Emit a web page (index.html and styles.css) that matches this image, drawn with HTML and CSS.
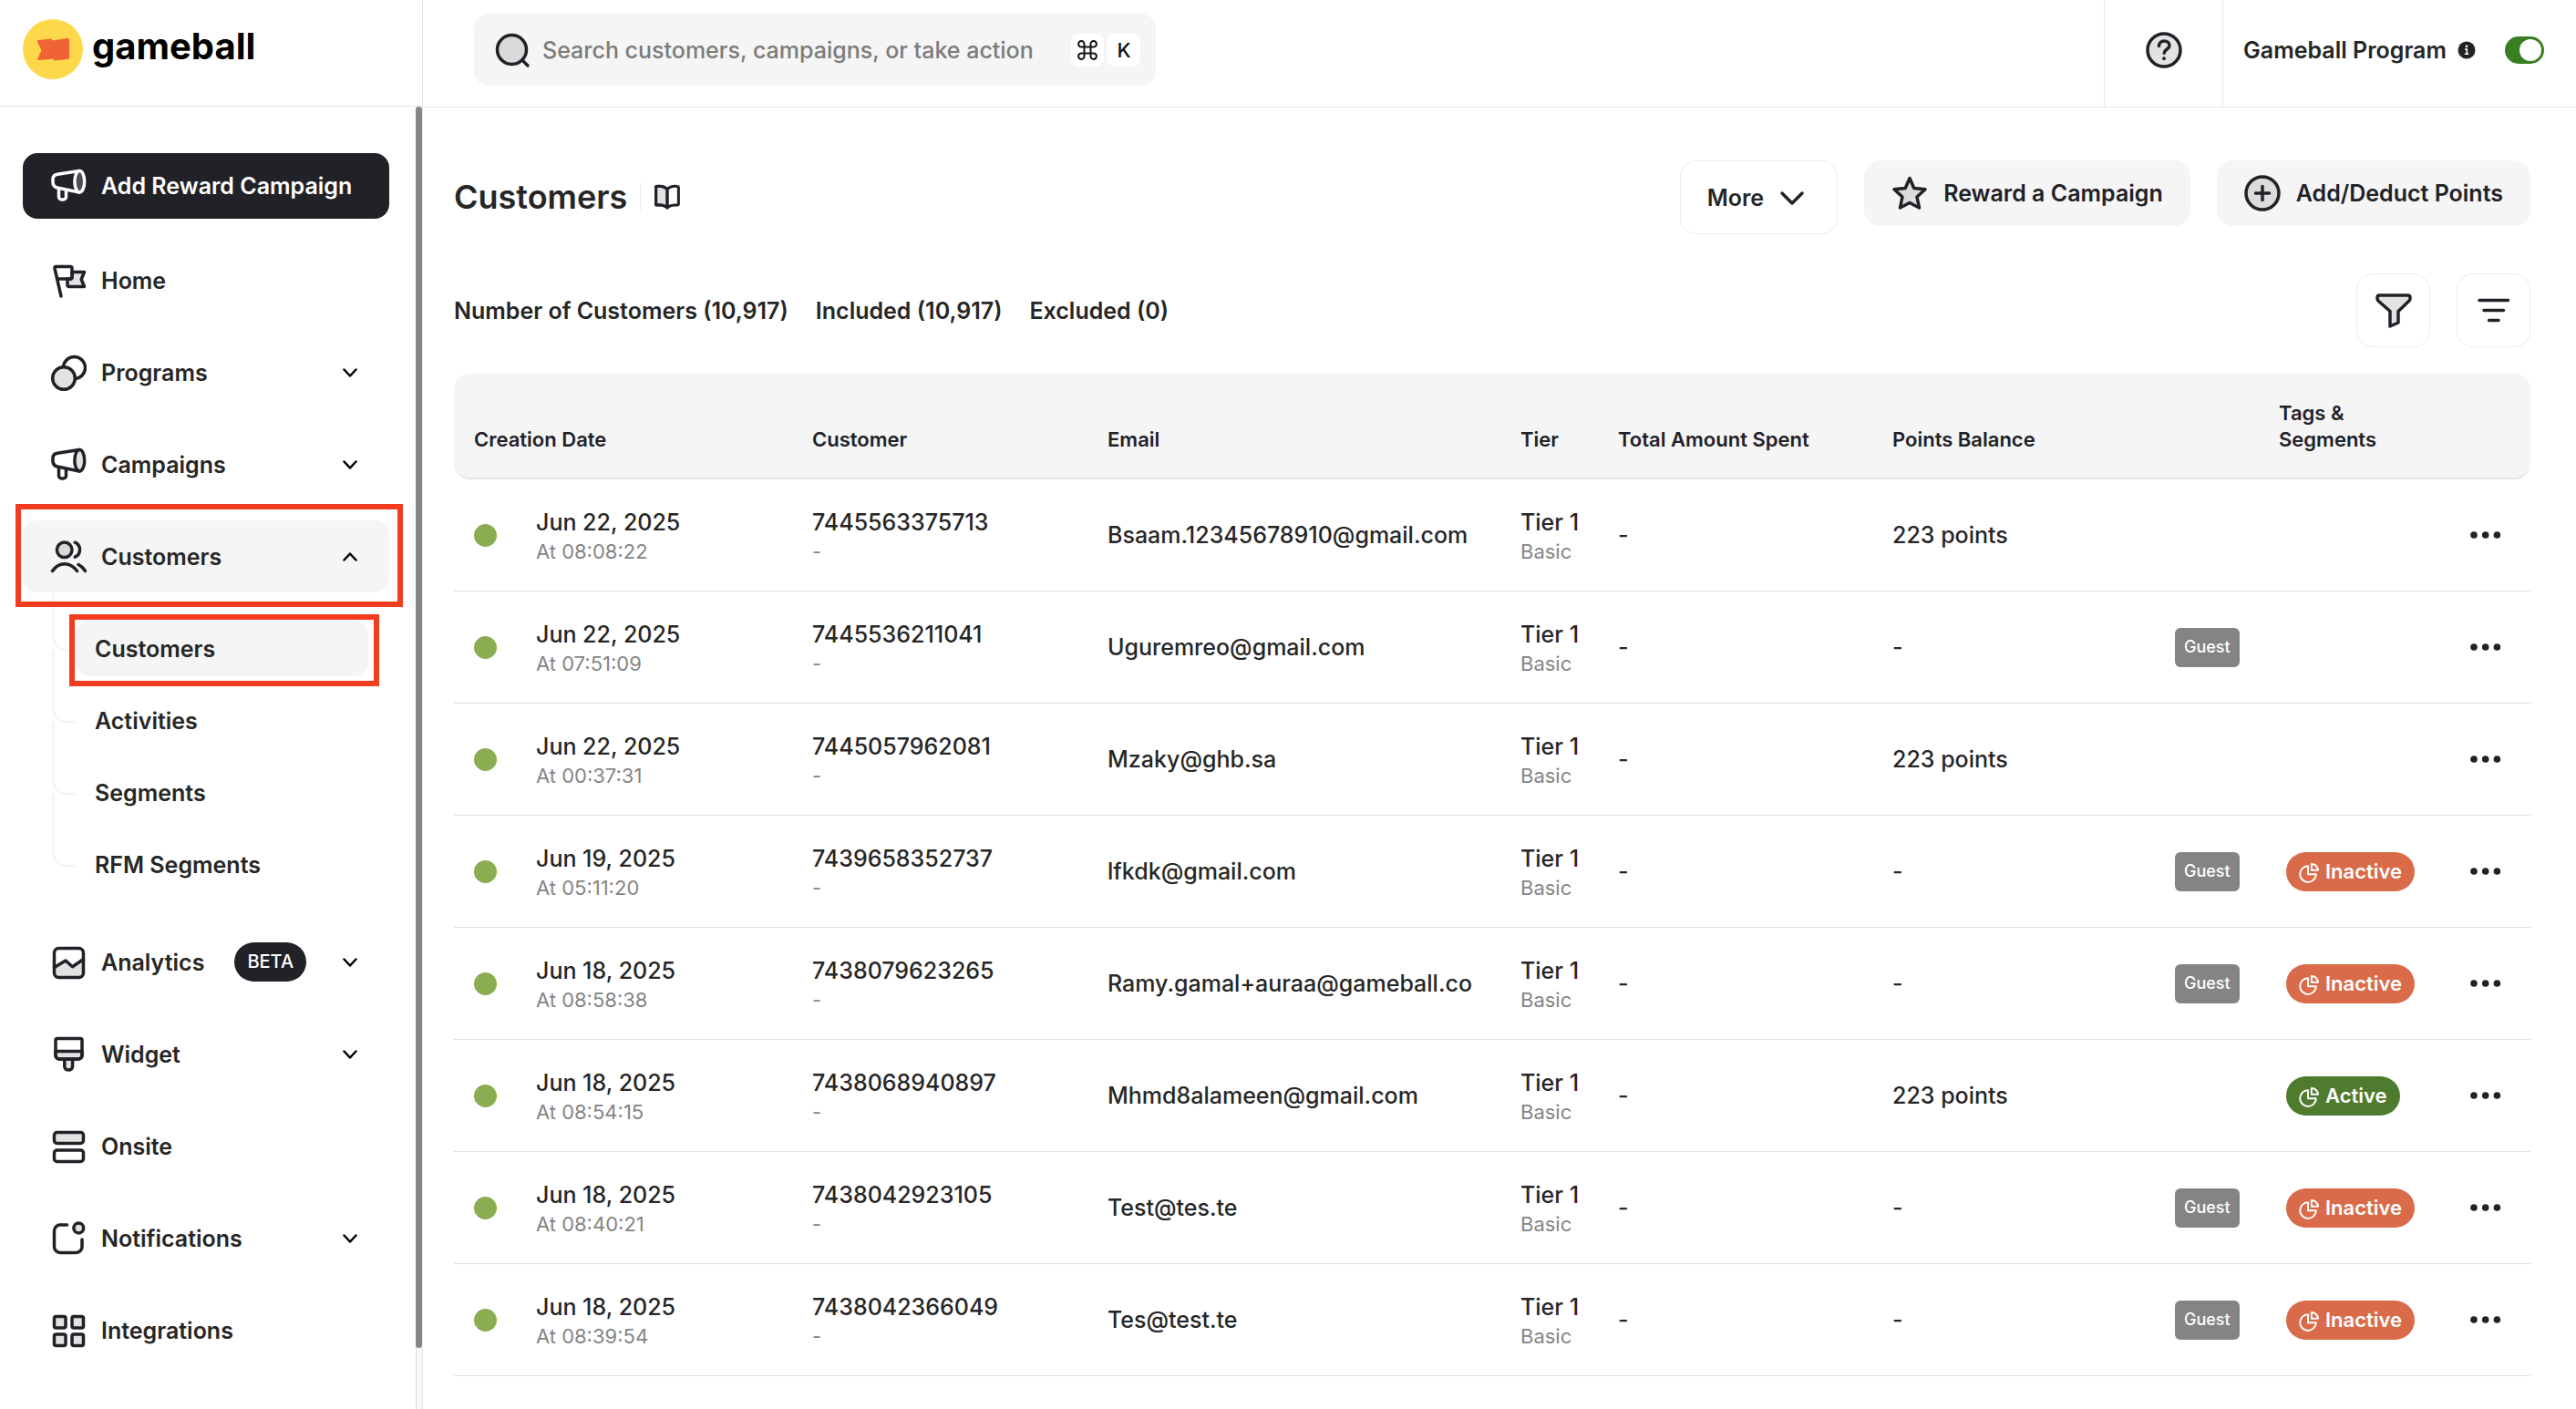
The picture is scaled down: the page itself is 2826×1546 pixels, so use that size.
FILE: index.html
```html
<!DOCTYPE html>
<html lang="en">
<head>
<meta charset="utf-8">
<meta name="viewport" content="width=device-width, initial-scale=1">
<title>Customers - Gameball</title>
<link rel="stylesheet" href="styles.css">
</head>
<body>
<svg class="sprite" aria-hidden="true">
  <symbol id="i-horn" viewBox="0 0 40 40"><path d="M32 3.4 8 7.2C5 7.7 3 9.5 3 12.5V16c0 3.5 2 5.3 5 6l24 5"/><path d="M9.5 23.5V32a3 3 0 0 0 3 3h2a3 3 0 0 0 3-3v-7"/><ellipse class="tint" cx="32.3" cy="15.2" rx="5.4" ry="11.8"/></symbol>
  <symbol id="i-flag" viewBox="0 0 40 40"><path class="tint" d="M24 10.5h13.5l-3.3 8 3.3 8H21a2 2 0 0 1-2-2V18h3a2 2 0 0 0 2-2z"/><path d="M12 37 5 6.500Q4.600 4.500 6.500 4.500H22a2 2 0 0 1 2 2V16a2 2 0 0 1-2 2H8"/></symbol>
  <symbol id="i-coins" viewBox="0 0 40 40"><circle cx="26.5" cy="14.5" r="12"/><circle class="tint" cx="15" cy="26" r="12.3"/></symbol>
  <symbol id="i-people" viewBox="0 0 40 40"><circle class="tint" cx="15.7" cy="12.3" r="8.3"/><path d="M27.3 4.200c7 3 7 13 0 16M2.500 35.500c7-10.500 19.500-10.500 27 0M31 28.500c3.500 1.500 5.500 4 7.500 7"/></symbol>
  <symbol id="i-chart" viewBox="0 0 40 40"><path class="tint" stroke="none" d="M4.500 25.500 17 18l7.500 6.700 12-8V31a5 5 0 0 1-5 5h-22a5 5 0 0 1-5-5z"/><rect x="4.5" y="4.5" width="32" height="32" rx="5"/><path d="M4.500 25.500 17 18l7.500 6.700 12-8.200"/></symbol>
  <symbol id="i-brush" viewBox="0 0 40 40"><path class="tint" d="M15.800 26v7.500a4.500 4.500 0 0 0 8.800 0V26M6 16.500h29V21a4 4 0 0 1-4 4H10a4 4 0 0 1-4-4z"/><path d="M8 2.500h25a2 2 0 0 1 2 2V21a4 4 0 0 1-4 4H10a4 4 0 0 1-4-4V4.500a2 2 0 0 1 2-2z"/></symbol>
  <symbol id="i-rows" viewBox="0 0 40 40"><rect class="tint" x="4.5" y="4.5" width="32" height="12" rx="3"/><rect x="4.5" y="24" width="32" height="12.5" rx="3"/></symbol>
  <symbol id="i-notify" viewBox="0 0 40 40"><path d="M18.500 5H11a6.500 6.500 0 0 0-6.500 6.500V29a6.500 6.500 0 0 0 6.500 6.500h17.500A6.500 6.500 0 0 0 35 29v-8"/><circle class="tint" cx="31.3" cy="8.5" r="5.4"/></symbol>
  <symbol id="i-grid" viewBox="0 0 40 40"><g class="tint"><rect x="4.5" y="4.5" width="12.5" height="12.5" rx="2"/><rect x="24" y="4.5" width="12.5" height="12.5" rx="2"/><rect x="4.5" y="24" width="12.5" height="12.5" rx="2"/><rect x="24" y="24" width="12.5" height="12.5" rx="2"/></g></symbol>
  <symbol id="i-down" viewBox="0 0 16 16"><path d="m1.500 4.500 6.500 7 6.500-7"/></symbol>
  <symbol id="i-up" viewBox="0 0 16 16"><path d="m1.500 11.500 6.500-7 6.500 7"/></symbol>
  <symbol id="i-more" viewBox="0 0 40 40"><g fill="currentColor" stroke="none"><circle cx="7" cy="20" r="3.8"/><circle cx="19.7" cy="20" r="3.8"/><circle cx="32.4" cy="20" r="3.8"/></g></symbol>
  <symbol id="i-pie" viewBox="0 0 24 24"><path d="M11 4.300A8.800 8.800 0 1 0 19.800 13.200H11z"/><path d="M14.800 2v6.800H22A7 7 0 0 0 14.800 2z"/></symbol>
</svg>
<div class="app">
  <aside class="sidebar">
    <a class="brand" href="#">
      <svg class="brand-mark" viewBox="0 0 66 66" aria-hidden="true"><circle cx="33" cy="33" r="33" fill="#fcd84a"/><path d="M17 23 32 21.500v2L49 21q2 0 2 2v19q0 2-2 2L34 45.500v-2L18 45q-2.500.300-1.500-2l4-9-4.500-9q-.800-2 1-2z" fill="#f06433"/></svg>
      <span class="brand-name">gameball</span>
    </a>
    <div class="sidebar-body">
      <nav class="nav" aria-label="Main">
        <button class="cta" type="button"><svg class="icon"><use href="#i-horn"/></svg>Add Reward Campaign</button>
        <ul class="nav-list">
          <li><a class="nav-item" href="#"><svg class="icon"><use href="#i-flag"/></svg>Home</a></li>
          <li><a class="nav-item" href="#"><svg class="icon"><use href="#i-coins"/></svg>Programs<svg class="chevron"><use href="#i-down"/></svg></a></li>
          <li><a class="nav-item" href="#"><svg class="icon"><use href="#i-horn"/></svg>Campaigns<svg class="chevron"><use href="#i-down"/></svg></a></li>
          <li>
            <a class="nav-item active" href="#"><svg class="icon"><use href="#i-people"/></svg>Customers<svg class="chevron"><use href="#i-up"/></svg></a>
            <ul class="sub-list">
              <li><a class="sub-item active" href="#" aria-current="page">Customers</a></li>
              <li><a class="sub-item" href="#">Activities</a></li>
              <li><a class="sub-item" href="#">Segments</a></li>
              <li><a class="sub-item" href="#">RFM Segments</a></li>
            </ul>
          </li>
          <li><a class="nav-item" href="#"><svg class="icon"><use href="#i-chart"/></svg>Analytics<span class="beta">BETA</span><svg class="chevron"><use href="#i-down"/></svg></a></li>
          <li><a class="nav-item" href="#"><svg class="icon"><use href="#i-brush"/></svg>Widget<svg class="chevron"><use href="#i-down"/></svg></a></li>
          <li><a class="nav-item" href="#"><svg class="icon"><use href="#i-rows"/></svg>Onsite</a></li>
          <li><a class="nav-item" href="#"><svg class="icon"><use href="#i-notify"/></svg>Notifications<svg class="chevron"><use href="#i-down"/></svg></a></li>
          <li><a class="nav-item" href="#"><svg class="icon"><use href="#i-grid"/></svg>Integrations</a></li>
        </ul>
      </nav>
      <div class="scroll-track"><div class="scroll-thumb"></div></div>
    </div>
  </aside>

  <div class="main">
    <header class="topbar">
      <label class="search">
        <svg class="icon" viewBox="0 0 40 40" aria-hidden="true"><circle class="tint" cx="19.5" cy="19.5" r="16"/><path d="m32 32 5 5"/></svg>
        <input type="search" placeholder="Search customers, campaigns, or take action" aria-label="Search">
        <span class="keys"><kbd><svg class="cmd" viewBox="0 0 24 24" aria-label="Command"><path d="M8.500 8.500h7v7h-7zM8.500 8.500H5.500a3.200 3.200 0 1 1 3-3zM15.500 8.500v-3a3.200 3.200 0 1 1 3 3zM15.500 15.500h3a3.200 3.200 0 1 1-3 3zM8.500 15.500v3a3.200 3.200 0 1 1-3-3z"/></svg></kbd><kbd>K</kbd></span>
      </label>
      <div class="topbar-end">
        <button class="help" type="button" aria-label="Help"><svg class="icon" viewBox="0 0 40 40"><circle class="tint" cx="20" cy="20" r="18"/><path d="M14.500 15.500c0-3.500 2.500-5.500 5.800-5.500 3.200 0 5.700 2 5.700 5 0 4-5.500 4-5.800 8.200"/><circle cx="20" cy="29.2" r="1.9" fill="currentColor" stroke="none"/></svg></button>
        <div class="program">
          <label for="program-toggle">Gameball Program</label>
          <svg class="info" viewBox="0 0 20 20" aria-hidden="true"><circle cx="10" cy="10" r="9.5" fill="#222"/><path d="M8 9h2.300v5M7.800 14.300h4.600" fill="none" stroke="#fff" stroke-width="1.6"/><circle cx="10" cy="5.8" r="1.4" fill="#fff"/></svg>
          <input class="toggle" id="program-toggle" type="checkbox" role="switch" checked>
        </div>
      </div>
    </header>

    <main class="content">
      <div class="title-row">
        <div class="title-group">
          <h1>Customers</h1>
          <a class="guide" href="#" aria-label="Guide"><svg class="icon" viewBox="0 0 40 40"><path class="tint" d="M20 9C17 5.500 12 4 3.500 4.500V32C12 31 17 32.500 20 36z"/><path d="M20 9c3-3.500 8-5 14.500-4.500q2 0 2 2V30q0 2-2 2C28 31.500 23 32.500 20 36c-3-3.500-8-4.500-14.500-4q-2 0-2-2V6.500q0-2 2-2C12 4 17 5.500 20 9zV35"/></svg></a>
        </div>
        <div class="actions">
          <button class="btn-more" type="button">More<svg class="chevron-lg" viewBox="0 0 28 28"><path d="m3 9 11 11L25 9"/></svg></button>
          <button class="btn" type="button"><svg class="icon" viewBox="0 0 40 40"><path class="tint" d="M20 3.500 24.800 14.500 37 15.800 28 24 30.500 36 20 30.500 9.500 36 12 24 3 15.800 15.200 14.500z"/></svg>Reward a Campaign</button>
          <button class="btn" type="button"><svg class="icon" viewBox="0 0 40 40"><circle class="tint" cx="20" cy="20" r="18"/><path d="M12.500 20h15M20 12.500v15"/></svg>Add/Deduct Points</button>
        </div>
      </div>

      <div class="summary-row">
        <div class="counts"><span>Number of Customers (10,917)</span><span>Included (10,917)</span><span>Excluded (0)</span></div>
        <div class="actions">
          <button class="btn-square" type="button" aria-label="Filter"><svg class="icon" viewBox="0 0 40 40"><path class="tint" d="M4.500 3h31q2.500 0 2.500 2.500v1q0 1.500-1.500 3L25 20.500V33l-9 4V20.500L3.500 9.500Q2 8 2 6.500v-1Q2 3 4.500 3z"/></svg></button>
          <button class="btn-square" type="button" aria-label="Sort"><svg class="icon" viewBox="0 0 40 40"><path d="M4 8.500h31.500M9 19.500h21.500M14.500 30.500h10.500"/></svg></button>
        </div>
      </div>

      <table class="customers">
        <colgroup><col class="c-date"><col class="c-name"><col class="c-mail"><col class="c-tier"><col class="c-spent"><col class="c-points"><col class="c-guest"><col class="c-tags"><col class="c-menu"></colgroup>
        <thead>
          <tr><th scope="col">Creation Date</th><th scope="col">Customer</th><th scope="col">Email</th><th scope="col">Tier</th><th scope="col">Total Amount Spent</th><th scope="col">Points Balance</th><th></th><th scope="col">Tags &amp;<br>Segments</th><th></th></tr>
        </thead>
        <tbody>
          <tr>
            <td><div class="date"><i class="dot"></i><div class="stack">Jun 22, 2025<small>At 08:08:22</small></div></div></td>
            <td><div class="stack">7445563375713<small>-</small></div></td><td>Bsaam.12345678910@gmail.com</td><td><div class="stack">Tier 1<small>Basic</small></div></td><td>-</td><td>223 points</td><td></td><td></td>
            <td><button class="row-menu" type="button" aria-label="Row actions"><svg class="icon"><use href="#i-more"/></svg></button></td>
          </tr>
          <tr>
            <td><div class="date"><i class="dot"></i><div class="stack">Jun 22, 2025<small>At 07:51:09</small></div></div></td>
            <td><div class="stack">7445536211041<small>-</small></div></td><td>Uguremreo@gmail.com</td><td><div class="stack">Tier 1<small>Basic</small></div></td><td>-</td><td>-</td><td><span class="guest">Guest</span></td><td></td>
            <td><button class="row-menu" type="button" aria-label="Row actions"><svg class="icon"><use href="#i-more"/></svg></button></td>
          </tr>
          <tr>
            <td><div class="date"><i class="dot"></i><div class="stack">Jun 22, 2025<small>At 00:37:31</small></div></div></td>
            <td><div class="stack">7445057962081<small>-</small></div></td><td>Mzaky@ghb.sa</td><td><div class="stack">Tier 1<small>Basic</small></div></td><td>-</td><td>223 points</td><td></td><td></td>
            <td><button class="row-menu" type="button" aria-label="Row actions"><svg class="icon"><use href="#i-more"/></svg></button></td>
          </tr>
          <tr>
            <td><div class="date"><i class="dot"></i><div class="stack">Jun 19, 2025<small>At 05:11:20</small></div></div></td>
            <td><div class="stack">7439658352737<small>-</small></div></td><td>lfkdk@gmail.com</td><td><div class="stack">Tier 1<small>Basic</small></div></td><td>-</td><td>-</td><td><span class="guest">Guest</span></td><td><span class="tag"><svg class="pie"><use href="#i-pie"/></svg>Inactive</span></td>
            <td><button class="row-menu" type="button" aria-label="Row actions"><svg class="icon"><use href="#i-more"/></svg></button></td>
          </tr>
          <tr>
            <td><div class="date"><i class="dot"></i><div class="stack">Jun 18, 2025<small>At 08:58:38</small></div></div></td>
            <td><div class="stack">7438079623265<small>-</small></div></td><td>Ramy.gamal+auraa@gameball.co</td><td><div class="stack">Tier 1<small>Basic</small></div></td><td>-</td><td>-</td><td><span class="guest">Guest</span></td><td><span class="tag"><svg class="pie"><use href="#i-pie"/></svg>Inactive</span></td>
            <td><button class="row-menu" type="button" aria-label="Row actions"><svg class="icon"><use href="#i-more"/></svg></button></td>
          </tr>
          <tr>
            <td><div class="date"><i class="dot"></i><div class="stack">Jun 18, 2025<small>At 08:54:15</small></div></div></td>
            <td><div class="stack">7438068940897<small>-</small></div></td><td>Mhmd8alameen@gmail.com</td><td><div class="stack">Tier 1<small>Basic</small></div></td><td>-</td><td>223 points</td><td></td><td><span class="tag tag-active"><svg class="pie"><use href="#i-pie"/></svg>Active</span></td>
            <td><button class="row-menu" type="button" aria-label="Row actions"><svg class="icon"><use href="#i-more"/></svg></button></td>
          </tr>
          <tr>
            <td><div class="date"><i class="dot"></i><div class="stack">Jun 18, 2025<small>At 08:40:21</small></div></div></td>
            <td><div class="stack">7438042923105<small>-</small></div></td><td>Test@tes.te</td><td><div class="stack">Tier 1<small>Basic</small></div></td><td>-</td><td>-</td><td><span class="guest">Guest</span></td><td><span class="tag"><svg class="pie"><use href="#i-pie"/></svg>Inactive</span></td>
            <td><button class="row-menu" type="button" aria-label="Row actions"><svg class="icon"><use href="#i-more"/></svg></button></td>
          </tr>
          <tr>
            <td><div class="date"><i class="dot"></i><div class="stack">Jun 18, 2025<small>At 08:39:54</small></div></div></td>
            <td><div class="stack">7438042366049<small>-</small></div></td><td>Tes@test.te</td><td><div class="stack">Tier 1<small>Basic</small></div></td><td>-</td><td>-</td><td><span class="guest">Guest</span></td><td><span class="tag"><svg class="pie"><use href="#i-pie"/></svg>Inactive</span></td>
            <td><button class="row-menu" type="button" aria-label="Row actions"><svg class="icon"><use href="#i-more"/></svg></button></td>
          </tr>
        </tbody>
      </table>
    </main>
  </div>
</div>
</body>
</html>
```
FILE: styles.css
```css
:root {
  --ink: #212128;
  --text: #262626;
  --soft: #f5f5f5;
  --line: #e5e5e5;
  --tint: #e2e2e2;
  --mark: #f23c20;
}

* { box-sizing: border-box; }

body {
  margin: 0;
  background: #fff;
  color: var(--text);
  font: 500 25px/32px Inter, "Liberation Sans", sans-serif;
}

button, input, kbd { font: inherit; color: inherit; }
button { border: 0; background: none; padding: 0; cursor: pointer; }
a { color: inherit; text-decoration: none; }
ul { list-style: none; margin: 0; padding: 0; }

.sprite { display: none; }

.icon {
  width: 40px;
  height: 40px;
  flex: none;
  display: block;
  fill: none;
  stroke: currentColor;
  stroke-width: 3.5;
  stroke-linecap: round;
  stroke-linejoin: round;
  color: var(--ink);
}
.tint { fill: var(--tint); }

.app {
  display: grid;
  grid-template-columns: 464px 1fr;
  min-height: 100vh;
}

/* Sidebar */
.sidebar {
  display: flex;
  flex-direction: column;
  border-right: 1px solid var(--line);
}
.brand {
  display: flex;
  align-items: center;
  gap: 10px;
  height: 117px;
  padding: 0 25px 8px;
  border-bottom: 1px solid var(--line);
}
.brand-mark { width: 66px; height: 66px; }
.brand-name {
  padding-bottom: 6px;
  color: #000;
  font-size: 40px;
  font-weight: 700;
  line-height: 48px;
}
.sidebar-body { flex: 1; display: flex; }
.nav { flex: 1; padding: 51px 29px 0 25px; font-weight: 600; }
.cta {
  display: flex;
  align-items: center;
  gap: 16px;
  width: 100%;
  height: 72px;
  margin-bottom: 28px;
  padding: 0 30px;
  border-radius: 16px;
  background: var(--ink);
  color: #fff;
  --tint: #4d4d52;
}
.cta .icon { color: #fff; }
.nav-list { display: flex; flex-direction: column; gap: 22px; }
.nav-item {
  position: relative;
  display: flex;
  align-items: center;
  gap: 16px;
  height: 79px;
  padding: 0 35px 0 30px;
  border-radius: 16px;
}
.nav-item.active { background: var(--soft); --tint: #d9d9d9; }
.nav-item.active::after,
.sub-item.active::after {
  content: "";
  position: absolute;
  border: 6px solid var(--mark);
}
.nav-item.active::after { inset: -18px -15px -16px -8px; z-index: 1; }
.sub-item.active::after { inset: -7px -12px -11px -7px; }
.chevron {
  width: 16px;
  height: 16px;
  margin-left: auto;
  fill: none;
  stroke: #000;
  stroke-width: 2.5;
  stroke-linecap: round;
  stroke-linejoin: round;
}
.beta {
  margin-left: 17px;
  padding: 0 14px;
  border-radius: 22px;
  background: var(--ink);
  color: #fff;
  font-size: 20px;
  font-weight: 500;
  line-height: 43px;
}
.sub-list {
  display: flex;
  flex-direction: column;
  gap: 18px;
  padding: 31px 23px 15px 58px;
}
.sub-list li { position: relative; }
.sub-list li::before {
  content: "";
  position: absolute;
  left: -26px;
  bottom: 27px;
  width: 23px;
  height: 78px;
  border: solid var(--soft);
  border-width: 0 0 3px 3px;
  border-bottom-left-radius: 16px;
}
.sub-list li:first-child::before { height: 65px; }
.sub-item {
  position: relative;
  display: flex;
  align-items: center;
  height: 61px;
  padding: 0 21px;
  border-radius: 16px;
}
.sub-item.active { background: var(--soft); }
.scroll-track {
  width: 7px;
  background: #f7f7f7;
  border-left: 1px solid #dcdcdc;
}
.scroll-thumb {
  height: calc(100% - 67px);
  margin-left: -1px;
  border-radius: 4px;
  background: #858585;
}

/* Top bar */
.topbar {
  display: flex;
  justify-content: space-between;
  height: 118px;
  border-bottom: 1px solid var(--line);
}
.search {
  display: flex;
  align-items: center;
  width: 748px;
  height: 79px;
  margin: 15px 0 0 56px;
  padding: 0 17px 0 22px;
  border-radius: 16px;
  background: var(--soft);
  --tint: #d9d9d9;
}
.search input {
  flex: 1;
  min-width: 0;
  padding: 0;
  margin-left: 13px;
  border: 0;
  outline: 0;
  background: none;
  appearance: none;
}
.search input::placeholder { color: #7b7b7b; opacity: 1; }
.keys { display: flex; gap: 4px; }
kbd {
  display: grid;
  place-items: center;
  width: 36px;
  height: 36px;
  border-radius: 8px;
  background: #fff;
  font-size: 22px;
  color: #111;
}
.cmd { width: 24px; height: 24px; fill: none; stroke: #111; stroke-width: 2; }
.topbar-end { display: flex; }
.help {
  display: grid;
  place-items: center;
  width: 130px;
  padding-bottom: 8px;
  border-left: 1px solid var(--line);
}
.program {
  display: flex;
  align-items: center;
  padding: 0 35px 8px 22px;
  border-left: 1px solid var(--line);
  font-weight: 600;
}
.info { width: 20px; height: 20px; margin: 0 32px 0 12px; }
.toggle {
  appearance: none;
  width: 43px;
  height: 30px;
  margin: 0;
  padding: 3px;
  border-radius: 15px;
  background: #377f22;
}
.toggle::before {
  content: "";
  display: block;
  width: 24px;
  height: 24px;
  margin-left: 13px;
  border-radius: 50%;
  background: #fff;
}

/* Page content */
.content { padding: 58px 50px 32px 34px; }
.title-row, .summary-row {
  display: flex;
  justify-content: space-between;
}
.title-group { display: flex; align-items: center; height: 79px; }
h1 { margin: 0; font-size: 36px; line-height: 44px; font-weight: 600; }
.guide {
  margin-left: 14px;
  padding-left: 14px;
  border-left: 1px solid #ececec;
}
.guide .icon { width: 30px; height: 30px; stroke-width: 4; }
.actions { display: flex; align-items: flex-start; gap: 29px; font-weight: 600; }
.btn, .btn-more, .btn-square {
  display: flex;
  align-items: center;
  border-radius: 18px;
}
.btn {
  gap: 17px;
  height: 72px;
  padding: 0 30px;
  background: var(--soft);
  color: var(--ink);
  --tint: #dcdcdc;
}
.btn-more, .btn-square { height: 81px; border: 1px solid #ebebeb; }
.btn-more { gap: 17px; padding: 0 35px 0 29px; }
.chevron-lg {
  width: 28px;
  height: 28px;
  fill: none;
  stroke: var(--ink);
  stroke-width: 3.5;
  stroke-linecap: round;
  stroke-linejoin: round;
}
.btn-square { justify-content: center; width: 81px; }
.summary-row { align-items: center; margin: 43px 0 29px; }
.counts { display: flex; gap: 30px; font-weight: 600; }

/* Customer table */
.customers {
  width: 100%;
  table-layout: fixed;
  border-collapse: separate;
  border-spacing: 0;
}
.c-date { width: 393px; }
.c-name { width: 324px; }
.c-tier { width: 107px; }
.c-spent { width: 301px; }
.c-points { width: 310px; }
.c-guest { width: 114px; }
.c-tags { width: 207px; }
.c-menu { width: 69px; }
th {
  height: 116px;
  padding: 0 0 27px;
  border-bottom: 2px solid var(--line);
  background: var(--soft);
  color: var(--ink);
  font-size: 22px;
  line-height: 29px;
  font-weight: 600;
  text-align: left;
  vertical-align: bottom;
}
th:first-child { border-radius: 18px 0 0 18px; }
th:last-child { border-radius: 0 18px 18px 0; }
td {
  height: 123px;
  padding: 0;
  border-bottom: 1px solid #dfe1e4;
  vertical-align: middle;
}
th:first-child, td:first-child { padding-left: 22px; }
.stack { padding-top: 3px; }
small { display: block; color: #858585; font-size: 22px; font-weight: 400; }
.date { display: flex; align-items: center; gap: 43px; }
.dot { width: 25px; height: 25px; border-radius: 50%; background: #8aad52; }
.guest, .tag {
  display: inline-flex;
  align-items: center;
  height: 43px;
  color: #fff;
  vertical-align: middle;
}
.guest {
  padding: 0 10px;
  border-radius: 6px;
  background: #848484;
  font-size: 18px;
}
.tag {
  gap: 6px;
  margin-left: 8px;
  padding: 0 14px 0 13px;
  border-radius: 22px;
  background: #d96b4a;
  font-size: 22px;
  font-weight: 600;
}
.tag-active { background: #4f7b2f; }
.pie {
  width: 24px;
  height: 24px;
  margin-top: 3px;
  fill: none;
  stroke: #fff;
  stroke-width: 2;
  stroke-linejoin: round;
}
.row-menu { display: block; }
```
